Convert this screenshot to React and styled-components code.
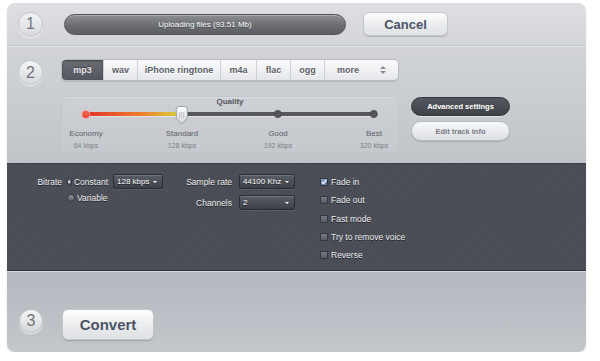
import React from "react";
import styled, { createGlobalStyle } from "styled-components";

const GlobalStyle = createGlobalStyle`
  body {
    margin: 0;
    background: #fff;
    font-family: "Liberation Sans", Arial, sans-serif;
  }
`;

const Panel = styled.div`
  width: 579px;
  margin: 3px 0 0 7px;
  border-radius: 8px;
  overflow: hidden;
  box-shadow: 0 1px 2px rgba(0, 0, 0, 0.12);
  display: flex;
  flex-direction: column;
`;

const Section = styled.div`
  display: flex;
  align-items: ${(p) => p.$align || "center"};
  padding: ${(p) => p.$pad};
  height: ${(p) => p.$h}px;
  box-sizing: border-box;
  background: ${(p) => p.$bg};
  border-bottom: ${(p) => p.$line || "none"};
  border-top: ${(p) => p.$topLine || "none"};
`;

const StepCircle = styled.div`
  flex: none;
  width: ${(p) => p.$size || 25}px;
  height: ${(p) => p.$size || 25}px;
  margin-top: ${(p) => p.$mt || 0}px;
  margin-bottom: ${(p) => p.$mb || 0}px;
  border-radius: 50%;
  box-sizing: border-box;
  background: linear-gradient(#f4f5f6, #d6d8db);
  border: 1px solid #c2c5c9;
  box-shadow: 0 1px 1px rgba(255, 255, 255, 0.8);
  display: flex;
  align-items: center;
  justify-content: center;
  color: #70747b;
  font-size: 16px;
  line-height: 1;
`;

const Progress = styled.div`
  margin-left: 21px;
  width: 282px;
  height: 21px;
  box-sizing: border-box;
  border-radius: 11px;
  border: 1px solid #505257;
  background: linear-gradient(#8d8f94, #6b6d72 55%, #5d5f64);
  box-shadow: inset 0 1px 0 rgba(255, 255, 255, 0.25);
  display: flex;
  align-items: center;
  justify-content: center;
  color: #fff;
  font-size: 8px;
  text-shadow: 0 1px 0 rgba(0, 0, 0, 0.4);
`;

const LightButton = styled.button`
  width: ${(p) => p.$w}px;
  height: ${(p) => p.$h}px;
  margin-left: ${(p) => p.$ml || 0}px;
  padding: 0;
  box-sizing: border-box;
  border-radius: ${(p) => p.$r || 6}px;
  border: 1px solid #c3c6ca;
  background: linear-gradient(#fdfdfd, #e9eaec 60%, #dfe1e4);
  box-shadow: 0 1px 1px rgba(0, 0, 0, 0.18);
  color: #4b5466;
  font-family: "Liberation Sans", Arial, sans-serif;
  font-weight: bold;
  font-size: ${(p) => p.$fs}px;
`;

const Content = styled.div`
  display: flex;
  flex-direction: column;
  align-items: flex-start;
  margin-left: 18px;
`;

const Tabs = styled.div`
  display: flex;
  height: 22px;
  border-radius: 5px;
  border: 1px solid #b9bcc1;
  box-sizing: border-box;
  overflow: hidden;
  background: linear-gradient(#fbfbfc, #e4e6e9);
  box-shadow: 0 1px 1px rgba(0, 0, 0, 0.12);
`;

const Tab = styled.div`
  width: ${(p) => p.$w}px;
  flex: none;
  box-sizing: border-box;
  display: flex;
  align-items: center;
  justify-content: ${(p) => (p.$between ? "space-between" : "center")};
  padding: ${(p) => (p.$between ? "0 12px 0 12px" : "0")};
  font-size: 9px;
  font-weight: bold;
  color: ${(p) => (p.$active ? "#e4e6ea" : "#5b5f67")};
  background: ${(p) =>
    p.$active ? "linear-gradient(#6a6d73, #53565c)" : "transparent"};
  box-shadow: ${(p) =>
    p.$active ? "inset 0 1px 2px rgba(0,0,0,0.4)" : "none"};
  border-left: ${(p) => (p.$first ? "none" : "1px solid #cdd0d4")};
  text-shadow: ${(p) =>
    p.$active ? "0 -1px 0 rgba(0,0,0,0.4)" : "0 1px 0 #fff"};
`;

const Arrows = styled.div`
  display: flex;
  flex-direction: column;
  gap: 2px;
  span {
    width: 0;
    height: 0;
    border-left: 3px solid transparent;
    border-right: 3px solid transparent;
  }
  span:first-child {
    border-bottom: 3px solid #8b8e94;
  }
  span:last-child {
    border-top: 3px solid #8b8e94;
  }
`;

const QualityRow = styled.div`
  display: flex;
  margin-top: 15px;
  gap: 12px;
`;

const QualityBox = styled.div`
  width: 338px;
  height: 57px;
  box-sizing: border-box;
  border-radius: 6px;
  border: 1px solid #c3c6cb;
  background: rgba(255, 255, 255, 0.07);
  box-shadow: inset 0 1px 0 rgba(255, 255, 255, 0.3);
  display: flex;
  flex-direction: column;
`;

const QualityTitle = styled.div`
  height: 10px;
  line-height: 10px;
  text-align: center;
  font-size: 8px;
  font-weight: bold;
  color: #55585e;
`;

const SliderArea = styled.div`
  position: relative;
  margin: 1px 24px 0 24px;
  height: 44px;
`;

const Track = styled.div`
  position: absolute;
  left: 0;
  right: 0;
  top: 4px;
  height: 4px;
  border-radius: 2px;
  background: #56585d;
  box-shadow: 0 1px 0 rgba(255, 255, 255, 0.4);
`;

const Fill = styled.div`
  position: absolute;
  left: 0;
  top: 4px;
  height: 4px;
  border-radius: 2px;
  background: linear-gradient(90deg, #e3302a, #ee7b2c 55%, #d6d43e);
`;

const Stop = styled.div`
  position: absolute;
  top: 0;
  transform: translateX(-50%);
  display: flex;
  flex-direction: column;
  align-items: center;
  white-space: nowrap;
`;

const Marker = styled.div`
  position: relative;
  height: 12px;
  width: 14px;
  display: flex;
  align-items: center;
  justify-content: center;
`;

const Dot = styled.div`
  width: ${(p) => (p.$red ? 9 : 8)}px;
  height: ${(p) => (p.$red ? 9 : 8)}px;
  border-radius: 50%;
  box-sizing: border-box;
  background: ${(p) =>
    p.$red ? "radial-gradient(circle at 50% 40%, #ff6a55, #dd2b22)" : "#55575c"};
  border: 1px solid ${(p) => (p.$red ? "#f7a39a" : "#46484c")};
`;

const ThumbSvg = styled.svg`
  position: absolute;
  top: -2px;
  left: 50%;
  transform: translateX(-50%);
`;

const StopLabel = styled.div`
  margin-top: 9px;
  font-size: 8px;
  line-height: 10px;
  color: #5b5f66;
`;

const StopKbps = styled.div`
  margin-top: 2px;
  font-size: 7px;
  line-height: 9px;
  color: #7c8087;
`;

const SideButtons = styled.div`
  display: flex;
  flex-direction: column;
  gap: 5px;
  margin-top: 1px;
`;

const DarkPill = styled.button`
  width: 99px;
  height: 19px;
  padding: 0;
  border-radius: 10px;
  border: 1px solid #36383d;
  background: linear-gradient(#54575d, #3f4247);
  box-shadow: 0 1px 0 rgba(255, 255, 255, 0.5);
  color: #fff;
  font-family: "Liberation Sans", Arial, sans-serif;
  font-size: 7.5px;
  font-weight: bold;
`;

const LightPill = styled(DarkPill)`
  height: 20px;
  border: 1px solid #b7bac0;
  background: linear-gradient(#f7f8f9, #dcdee2);
  box-shadow: 0 1px 1px rgba(0, 0, 0, 0.15);
  color: #767a82;
`;

const DarkPanel = styled.div`
  height: 108px;
  box-sizing: border-box;
  padding-top: 10px;
  display: flex;
  align-items: flex-start;
  background-color: #4b4e56;
  background-image: repeating-linear-gradient(
      45deg,
      rgba(255, 255, 255, 0.02) 0 1px,
      transparent 1px 3px
    ),
    repeating-linear-gradient(
      -45deg,
      rgba(0, 0, 0, 0.05) 0 1px,
      transparent 1px 3px
    );
  border-top: 1px solid #3c3f45;
  border-bottom: 1px solid #31333a;
  color: #eef0f3;
  font-size: 8.5px;
  text-shadow: 0 1px 0 rgba(0, 0, 0, 0.6);
`;

const FieldGrid = styled.div`
  display: grid;
  grid-template-columns: ${(p) => p.$cols};
  grid-auto-rows: 15px;
  column-gap: ${(p) => p.$colGap}px;
  row-gap: ${(p) => p.$rowGap}px;
  margin-left: ${(p) => p.$ml}px;
  align-items: center;
`;

const FieldLabel = styled.div`
  text-align: right;
`;

const Choice = styled.label`
  display: flex;
  align-items: center;
  gap: 2px;
  grid-column: ${(p) => p.$col || "auto"};
  white-space: nowrap;
`;

const Radio = styled.span`
  width: 8px;
  height: 8px;
  border-radius: 50%;
  box-sizing: border-box;
  background: linear-gradient(#8f9298, #5c5f65);
  border: 1px solid #35373c;
  display: flex;
  align-items: center;
  justify-content: center;
  &::after {
    content: "";
    width: 2px;
    height: 2px;
    border-radius: 50%;
    background: ${(p) => (p.$on ? "#fff" : "transparent")};
  }
`;

const Select = styled.div`
  height: 15px;
  box-sizing: border-box;
  border-radius: 2px;
  border: 1px solid #2b2d32;
  background: linear-gradient(#5a5e66, #3d4047);
  box-shadow: inset 0 1px 0 rgba(255, 255, 255, 0.15), 0 1px 0 rgba(255, 255, 255, 0.08);
  display: flex;
  align-items: center;
  justify-content: space-between;
  padding: 0 5px 0 3px;
  font-size: 8px;
  color: #fff;
  &::after {
    content: "";
    width: 0;
    height: 0;
    border-left: 2px solid transparent;
    border-right: 2px solid transparent;
    border-top: 2px solid #fff;
  }
`;

const CheckList = styled.div`
  display: flex;
  flex-direction: column;
  gap: 6.3px;
  margin: 2px 0 0 25px;
`;

const CheckItem = styled.label`
  display: flex;
  align-items: center;
  gap: 3px;
  height: 12px;
`;

const Box = styled.span`
  width: 8px;
  height: 8px;
  border-radius: 1px;
  box-sizing: border-box;
  border: 1px solid #34363c;
  background: ${(p) =>
    p.$on ? "linear-gradient(#8aa0c8, #5e78a8)" : "linear-gradient(#767b88, #565a64)"};
  display: flex;
  align-items: center;
  justify-content: center;
`;

const tabs = [
  { name: "mp3", w: 41, active: true },
  { name: "wav", w: 34 },
  { name: "iPhone ringtone", w: 83 },
  { name: "m4a", w: 36 },
  { name: "flac", w: 34 },
  { name: "ogg", w: 34 },
];

const stops = [
  { label: "Economy", kbps: "64 kbps" },
  { label: "Standard", kbps: "128 kbps" },
  { label: "Good", kbps: "192 kbps" },
  { label: "Best", kbps: "320 kbps" },
];

const current = 1;

const checks = [
  { label: "Fade in", on: true },
  { label: "Fade out" },
  { label: "Fast mode" },
  { label: "Try to remove voice" },
  { label: "Reverse" },
];

const Thumb = () => (
  <ThumbSvg width="14" height="19" viewBox="0 0 14 19">
    <defs>
      <linearGradient id="thumbG" x1="0" y1="0" x2="0" y2="1">
        <stop offset="0" stopColor="#ffffff" />
        <stop offset="1" stopColor="#d3d5d9" />
      </linearGradient>
    </defs>
    <path
      d="M1.5 3.5 Q1.5 0.5 4.5 0.5 H9.5 Q12.5 0.5 12.5 3.5 V12 L7 18 L1.5 12 Z"
      fill="url(#thumbG)"
      stroke="#9a9da3"
    />
    <path d="M5 6 V12 M7 6 V12 M9 6 V12" stroke="#b4b7bc" strokeWidth="0.8" />
  </ThumbSvg>
);

export default function App() {
  return (
    <>
      <GlobalStyle />
      <Panel>
        <Section
          $h={43}
          $pad="0 0 0 11px"
          $bg="linear-gradient(#dedfe2, #d3d5d8)"
          $line="1px solid #c0c3c7"
        >
          <StepCircle>1</StepCircle>
          <Progress>Uploading files (93.51 Mb)</Progress>
          <LightButton $w={85} $h={24} $ml={17} $fs={13}>
            Cancel
          </LightButton>
        </Section>

        <Section
          $h={117}
          $align="flex-start"
          $pad="12px 0 0 11px"
          $bg="linear-gradient(#d1d3d7, #c0c4c9)"
          $topLine="1px solid #e6e7e9"
        >
          <StepCircle $mt={1}>2</StepCircle>
          <Content>
            <Tabs>
              {tabs.map((t, i) => (
                <Tab key={t.name} $w={t.w} $active={t.active} $first={i === 0}>
                  {t.name}
                </Tab>
              ))}
              <Tab $w={74} $between>
                more
                <Arrows>
                  <span />
                  <span />
                </Arrows>
              </Tab>
            </Tabs>
            <QualityRow>
              <QualityBox>
                <QualityTitle>Quality</QualityTitle>
                <SliderArea>
                  <Track />
                  <Fill style={{ width: `${(current / (stops.length - 1)) * 100}%` }} />
                  {stops.map((s, i) => (
                    <Stop key={s.label} style={{ left: `${(i / (stops.length - 1)) * 100}%` }}>
                      <Marker>
                        {i === current ? <Thumb /> : <Dot $red={i === 0} />}
                      </Marker>
                      <StopLabel>{s.label}</StopLabel>
                      <StopKbps>{s.kbps}</StopKbps>
                    </Stop>
                  ))}
                </SliderArea>
              </QualityBox>
              <SideButtons>
                <DarkPill>Advanced settings</DarkPill>
                <LightPill>Edit track info</LightPill>
              </SideButtons>
            </QualityRow>
          </Content>
        </Section>

        <DarkPanel>
          <FieldGrid $cols="55px 41px 50px" $colGap={5} $rowGap={1} $ml={0}>
            <FieldLabel>Bitrate</FieldLabel>
            <Choice>
              <Radio $on />
              Constant
            </Choice>
            <Select>128 kbps</Select>
            <Choice $col="2">
              <Radio />
              Variable
            </Choice>
          </FieldGrid>
          <FieldGrid $cols="60px 56px" $colGap={7} $rowGap={6} $ml={9}>
            <FieldLabel>Sample rate</FieldLabel>
            <Select>44100 Khz</Select>
            <FieldLabel>Channels</FieldLabel>
            <Select>2</Select>
          </FieldGrid>
          <CheckList>
            {checks.map((c) => (
              <CheckItem key={c.label}>
                <Box $on={c.on}>
                  {c.on && (
                    <svg width="6" height="6" viewBox="0 0 6 6">
                      <path d="M0.8 3 L2.4 4.6 L5.2 1.2" stroke="#fff" strokeWidth="1.2" fill="none" />
                    </svg>
                  )}
                </Box>
                {c.label}
              </CheckItem>
            ))}
          </CheckList>
        </DarkPanel>

        <Section
          $h={81}
          $pad="0 0 12px 12px"
          $align="flex-end"
          $bg="linear-gradient(#b4b9bf, #c3c6cb)"
          $topLine="1px solid #d5d8dc"
        >
          <StepCircle $size={24} $mb={7}>3</StepCircle>
          <LightButton $w={92} $h={31} $ml={19} $fs={15}>
            Convert
          </LightButton>
        </Section>
      </Panel>
    </>
  );
}
